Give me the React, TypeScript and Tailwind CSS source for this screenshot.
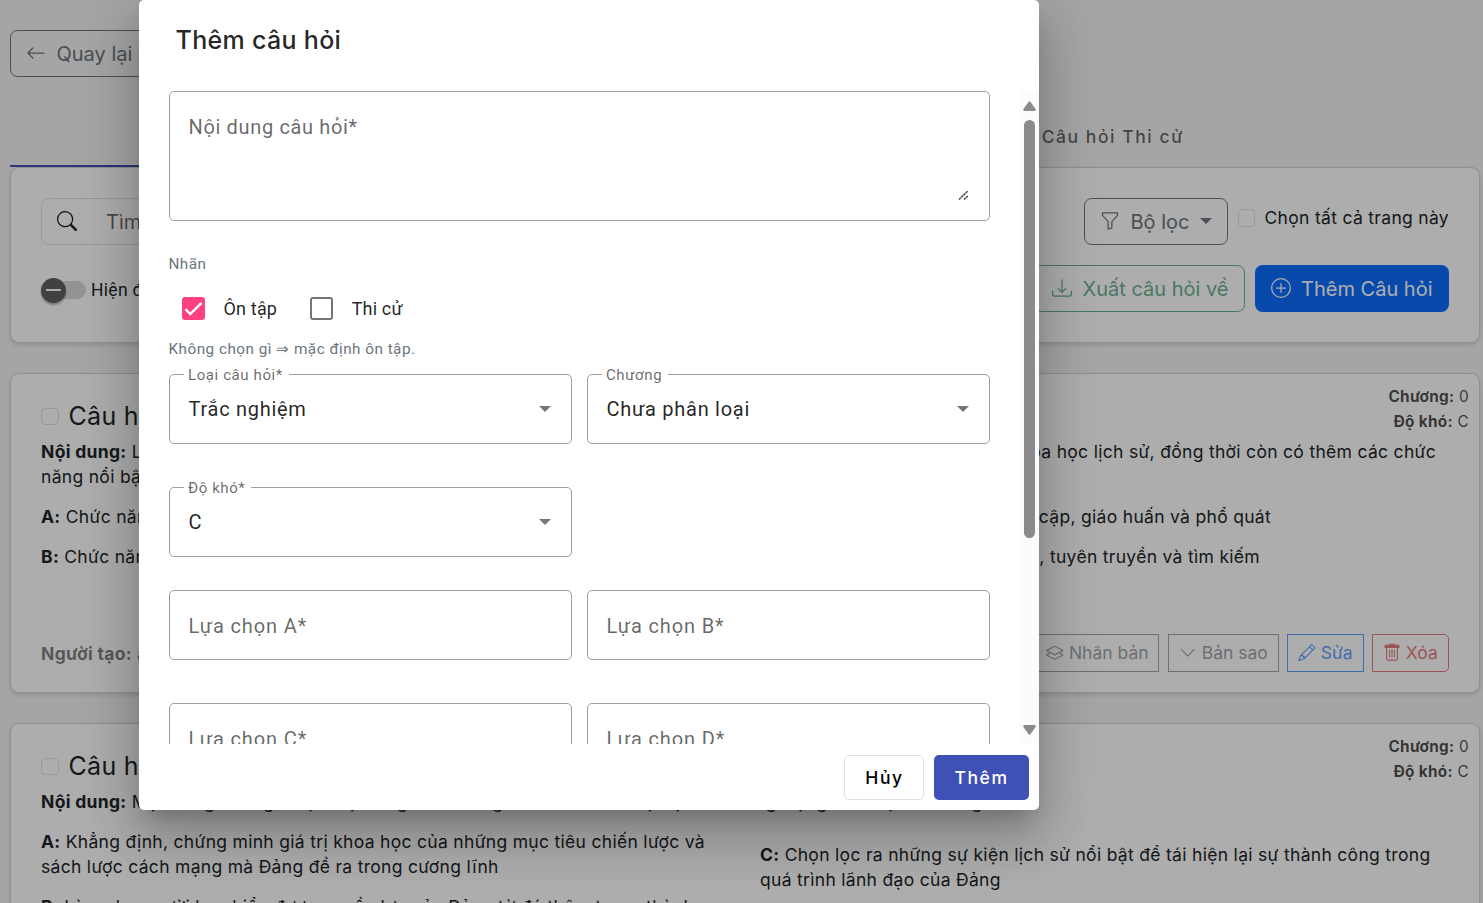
import React from "react";
import {
  BsArrowLeft,
  BsSearch,
  BsFunnel,
  BsDownload,
  BsPlusCircle,
  BsLayers,
  BsChevronDown,
  BsPencil,
} from "react-icons/bs";

const card = "rounded-[9px] border border-[#d5d5d5] bg-white shadow-[0_2px_5px_rgba(0,0,0,0.13)]";

function Box() {
  return <span className="block size-[17.5px] shrink-0 rounded-[4.5px] border border-[#dee2e6] bg-white" />;
}

function TrashIcon() {
  return (
    <svg viewBox="0 0 18 18" className="mb-[2px] mr-[4.5px] size-[18px] shrink-0" fill="none" stroke="currentColor">
      <path d="M1.6 1.8h14.8v3.2H1.6ZM6.5.8h5v2h-5Z" fill="currentColor" stroke="none" />
      <path d="M3.6 4.5v11q0 1.6 1.6 1.6h7.6q1.6 0 1.6-1.6v-11M6.6 6.8v7.4M9 6.8v7.4M11.4 6.8v7.4" strokeWidth="1.1" />
    </svg>
  );
}

function TabBar() {
  return (
    <div className="flex h-[60px] w-full text-[17.5px] font-medium tracking-[1.5625px] text-black/60">
      <div className="flex flex-1 items-center justify-center border-b-2 border-[#3f51b5] text-[#3f51b5]">Câu hỏi Ôn tập</div>
      <div className="flex flex-1 items-center justify-center pl-px">Câu hỏi Thi cử</div>
    </div>
  );
}

function Toolbar() {
  return (
    <section className={`${card} h-[176px] px-[30px] pt-[30px]`}>
      <div className="flex h-[47px] items-start justify-between">
        <div className="flex h-[47px] w-[420px] items-center rounded-[7.5px] border border-[#dee2e6] text-[20px] text-black/60">
          <BsSearch className="mb-[2px] ml-[15px] size-5 text-[#212529]" />
          <span className="ml-[29px]">Tìm kiếm câu hỏi</span>
        </div>
        <div className="flex items-start">
          <button className="flex h-[47px] w-[144px] items-center rounded-[7.5px] border border-[#6c757d] pl-[15px] text-[20px] text-[#6c757d]">
            <BsFunnel className="mb-[2px] size-5" />
            <span className="ml-[10.5px]">Bộ lọc</span>
            <span className="mb-[2px] ml-[10.5px] border-x-[6px] border-t-[6px] border-x-transparent border-t-[#6c757d]" />
          </button>
          <label className="ml-[10px] flex h-[40px] items-center gap-[9px] text-[17.5px] tracking-[0.3125px]">
            <Box />
            <span>Chọn tất cả trang này</span>
          </label>
        </div>
      </div>
      <div className="mt-[20px] flex items-center justify-between">
        <div className="flex items-center pt-[3px] font-['Roboto',sans-serif] text-[17.5px] tracking-[0.3125px]">
          <span className="flex h-[17.5px] w-[45px] items-center rounded-full bg-black/15">
            <span className="flex size-[25px] shrink-0 items-center justify-center rounded-full bg-[#616161] shadow-[0_2px_2px_rgba(0,0,0,0.3)]">
              <span className="h-[2px] w-[15px] bg-white" />
            </span>
          </span>
          <span className="ml-[5px]">Hiện đáp án</span>
        </div>
        <div className="flex gap-[10px] text-[20px]">
          <button className="flex h-[47px] w-[211px] items-center justify-end rounded-[7.5px] border border-[#198754] pr-[15.5px] text-[#198754] opacity-65">
            <BsDownload className="mb-[2px] mr-[10.5px] size-5" />
            Xuất câu hỏi về
          </button>
          <button className="flex h-[47px] w-[194px] items-center rounded-[7.5px] bg-[#0d6efd] pl-[16px] text-white">
            <BsPlusCircle className="mb-[2px] mr-[10px] size-5" />
            Thêm Câu hỏi
          </button>
        </div>
      </div>
    </section>
  );
}

function CardHead({ no }: { no: number }) {
  return (
    <div className="flex h-[65px] justify-between">
      <div className="flex items-center gap-[10px] pt-[20px]">
        <Box />
        <span className="text-[25px] tracking-[0.3125px]">Câu hỏi {no}</span>
      </div>
      <div className="-mr-[20px] pt-[10px] text-right text-[15.3px] leading-[25px] tracking-[0.3125px] text-black/70">
        <div><b>Chương:</b> 0</div>
        <div><b>Độ khó:</b> C</div>
      </div>
    </div>
  );
}

const small = "flex h-[38px] items-center justify-center border pb-[1px] text-[17.5px] tracking-normal opacity-65";

function Actions() {
  return (
    <div className="flex items-center justify-between">
      <span className="text-black/50"><b>Người tạo:</b> admin</span>
      <div className="flex">
        <button className={`${small} mr-[9px] w-[125px] border-[#6c757d] pl-[2px] text-[#6c757d]`}><BsLayers className="mr-[5px] size-[17.5px]" />Nhân bản</button>
        <button className={`${small} mr-[8px] w-[111px] border-[#6c757d] text-[#6c757d]`}><BsChevronDown className="mr-[5px] size-[17.5px]" />Bản sao</button>
        <button className={`${small} mr-[8px] w-[77px] border-[#0d6efd] text-[#0d6efd]`}><BsPencil className="mr-[5px] size-[17.5px]" />Sửa</button>
        <button className={`${small} w-[77px] rounded-r-[5px] border-[#dc3545] text-[#dc3545]`}><TrashIcon />Xóa</button>
      </div>
    </div>
  );
}

function Page() {
  return (
    <main className="flex h-full flex-col overflow-hidden bg-[#f4f4f4] pl-[10px] pr-[3px] pt-[30px]">
      <button className="flex h-[47px] w-[138px] shrink-0 items-center rounded-[7.5px] border border-[#6c757d] pl-[15px] text-[20px] text-[#6c757d]">
        <BsArrowLeft className="mb-[2px] mr-[10.5px] size-5" />
        Quay lại
      </button>
      <div className="mt-[30px] shrink-0"><TabBar /></div>
      <div className="shrink-0"><Toolbar /></div>

      <article className={`${card} mt-[30px] h-[320px] shrink-0 px-[30px] text-[17.5px] leading-[25px] tracking-[0.305px]`}>
        <CardHead no={1} />
        <div className="flex h-[25px] justify-between pr-[13px]">
          <span><b>Nội dung:</b> Lịch sử Đảng có chức năng</span>
          <span>của khoa học lịch sử, đồng thời còn có thêm các chức</span>
        </div>
        <p>năng nổi bật nào?</p>
        <div className="mt-[15px] grid grid-cols-2 gap-y-[15px]">
          <p><b>A:</b> Chức năng nhận thức và dự báo</p>
          <p className="w-[526px] text-right"><b>C:</b> Chức năng phổ cập, giáo huấn và phổ quát</p>
          <p><b>B:</b> Chức năng giáo dục và phê phán</p>
          <p className="w-[515px] text-right"><b>D:</b> Chức năng cổ động, tuyên truyền và tìm kiếm</p>
        </div>
        <div className="mt-[65px]"><Actions /></div>
      </article>

      <article className={`${card} mt-[30px] h-[320px] shrink-0 px-[30px] text-[17.5px] leading-[25px] tracking-[0.305px]`}>
        <CardHead no={2} />
        <p><b>Nội dung:</b> Một trong những nhiệm vụ trong chức năng của môn khoa học lịch sử Đảng Cộng sản Việt Nam là gì?</p>
        <div className="mt-[15px] flex">
          <div className="w-[719px] shrink-0">
            <p className="w-[690px]"><b>A:</b> Khẳng định, chứng minh giá trị khoa học của những mục tiêu chiến lược và sách lược cách mạng mà Đảng đề ra trong cương lĩnh</p>
            <p className="mt-[15px] w-[690px]"><b>B:</b> Làm cho người học hiểu được nguồn lực của Đảng từ đó thêm trung thành</p>
          </div>
          <p className="w-[690px] pt-[13px]"><b>C:</b> Chọn lọc ra những sự kiện lịch sử nổi bật để tái hiện lại sự thành công trong quá trình lãnh đạo của Đảng</p>
        </div>
      </article>
    </main>
  );
}

function Field({ label, value }: { label: string; value?: string }) {
  return (
    <div className="relative flex h-[70px] items-center justify-between rounded-[5px] border border-[#9e9e9e] pl-[18.5px] pr-[19px] text-[20px] tracking-[0.72px]">
      {value ? (
        <>
          <span className="absolute -top-[12px] left-[14px] bg-white pl-[4px] pr-[6px] text-[15px] leading-[24px] tracking-[0.6px] text-black/60">{label}</span>
          <span className="text-black/87">{value}</span>
          <span className="mr-[1px] border-x-[6.25px] border-t-[6.25px] border-x-transparent border-t-black/54" />
        </>
      ) : (
        <span className="pt-[2px] tracking-[0.87px] text-black/60">{label}</span>
      )}
    </div>
  );
}

function Check({ label, on }: { label: string; on?: boolean }) {
  return (
    <label className="flex items-center gap-[18.5px] text-[18px] tracking-[0.18px] text-black/87">
      {on ? (
        <svg viewBox="0 0 23 23" className="size-[23px] rounded-[3px] bg-[#ff4081]">
          <path d="M3.5 12.2 8.3 17 19.5 5.8" fill="none" stroke="#fff" strokeWidth="2.4" />
        </svg>
      ) : (
        <span className="size-[23px] rounded-[3px] border-2 border-black/54" />
      )}
      <span>{label}</span>
    </label>
  );
}

function Dialog() {
  return (
    <div
      role="dialog"
      className="flex h-[810px] w-[900px] flex-col overflow-hidden rounded-[5px] bg-white font-['Roboto',sans-serif] text-black/87 shadow-[0_14px_19px_-9px_rgba(0,0,0,0.2),0_30px_48px_4px_rgba(0,0,0,0.14),0_11px_58px_10px_rgba(0,0,0,0.12)]"
    >
      <h2 className="h-[91px] shrink-0 pl-[36.5px] pt-[20px] font-['Inter',sans-serif] text-[25px] font-medium leading-[40px] tracking-[0.3125px]">Thêm câu hỏi</h2>
      <div className="flex h-[653px] shrink-0 overflow-hidden">
        <form className="w-[881px] pl-[30px] pr-[30px]">
          <div className="flex h-[130px] items-start justify-between rounded-[5px] border border-[#9e9e9e] pl-[18.5px] pr-[20px] pt-[20px] text-[20px] leading-[30px] tracking-[0.65px] text-black/60">
            Nội dung câu hỏi*
            <svg viewBox="0 0 11 11" className="mt-[78px] size-[11px]" stroke="#444" strokeWidth="1.5">
              <path d="M1 9.5 9.8 1M6 9.5 9.8 6" strokeDasharray="2.6 0.5" />
            </svg>
          </div>
          <p className="-ml-[0.5px] mt-[31px] text-[15.3px] leading-[25px] tracking-[0.45px] text-[#6c757d]">Nhãn</p>
          <div className="mt-[6.5px] flex h-[50px] items-center gap-[33px] pl-[13px]">
            <Check label="Ôn tập" on />
            <Check label="Thi cử" />
          </div>
          <p className="-ml-[0.5px] mt-[3.5px] h-[37px] text-[15.3px] leading-[25px] tracking-[0.47px] text-[#6c757d]">Không chọn gì ⇒ mặc định ôn tập.</p>
          <div className="grid grid-cols-2 gap-x-[15px]">
            <Field label="Loại câu hỏi*" value="Trắc nghiệm" />
            <Field label="Chương" value="Chưa phân loại" />
          </div>
          <div className="mt-[43px] grid grid-cols-2 gap-x-[15px]">
            <Field label="Độ khó*" value="C" />
          </div>
          <div className="mt-[33px] grid grid-cols-2 gap-x-[15px] gap-y-[43px]">
            <Field label="Lựa chọn A*" />
            <Field label="Lựa chọn B*" />
            <Field label="Lựa chọn C*" />
            <Field label="Lựa chọn D*" />
          </div>
        </form>
        <div className="flex w-[19px] flex-col items-center justify-between bg-[#fcfcfc] pb-[9px] pt-[10px]">
          <svg viewBox="0 0 13 10" className="h-[10px] w-[13px]" fill="#8b8b8b"><path d="M5.6.8Q6.5-.3 7.4.8L12.6 8Q13.2 9.8 11.6 10H1.4Q-.2 9.8.4 8Z" /></svg>
          <div className="mb-auto mt-[9px] h-[418px] w-[11px] rounded-full bg-[#8b8b8b]" />
          <svg viewBox="0 0 13 10" className="h-[10px] w-[13px] rotate-180" fill="#8b8b8b"><path d="M5.6.8Q6.5-.3 7.4.8L12.6 8Q13.2 9.8 11.6 10H1.4Q-.2 9.8.4 8Z" /></svg>
        </div>
      </div>
      <div className="flex justify-end gap-[10px] pr-[10px] pt-[11px] font-['Inter',sans-serif] text-[17.5px] font-medium tracking-[1.5625px]">
        <button className="h-[45px] w-[80px] rounded-[5px] border border-black/12 pl-[1px] pt-[1px] text-black">Hủy</button>
        <button className="h-[45px] w-[95px] rounded-[5px] bg-[#3f51b5] pt-[1px] text-white">Thêm</button>
      </div>
    </div>
  );
}

export default function App() {
  return (
    <div className="relative h-screen overflow-hidden font-['Inter',sans-serif] text-[#212529]">
      <Page />
      <div className="absolute inset-0 bg-black/32 pl-[139px]">
        <Dialog />
      </div>
    </div>
  );
}
